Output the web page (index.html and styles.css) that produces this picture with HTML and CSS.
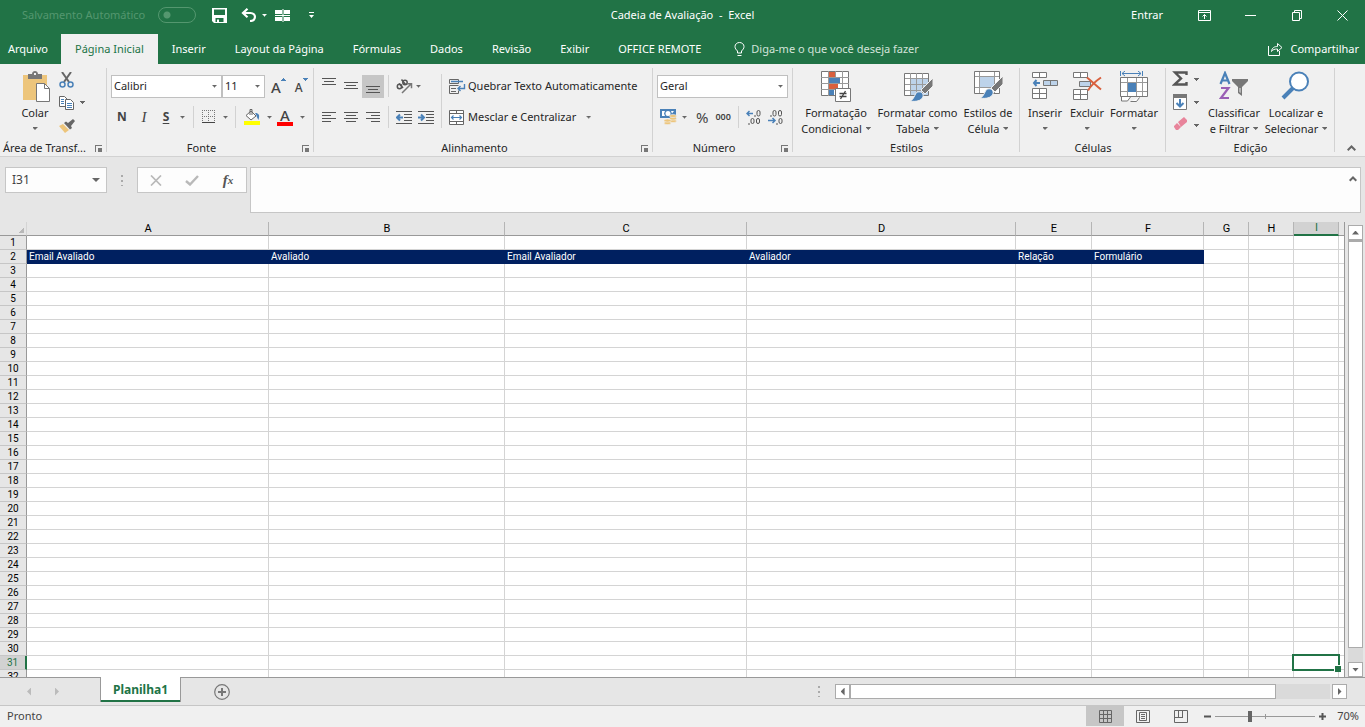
FILE: index.html
```html
<!DOCTYPE html>
<html lang="pt-BR">
<head>
<meta charset="utf-8">
<title>Cadeia de Avaliação - Excel</title>
<link rel="stylesheet" href="styles.css">
</head>
<body>
<div class="app">
  <header class="titlebar">
    <div class="quick">
      <label class="autosave">Salvamento Automático <input type="checkbox" disabled></label>
      <button class="qbtn save" aria-label="Salvar"><svg width="15" height="15" viewBox="0 0 15 15"><path fill="#fff" fill-rule="evenodd" d="M0 0h15v15H2l-2-2zM2 1.500v5.500h11v-5.500zM3.500 10v4h1.500v-2.500h2v2.500h4.500v-4z"/></svg></button>
      <button class="qbtn undo" aria-label="Desfazer"><svg width="16" height="14" viewBox="0 0 16 14"><path fill="none" stroke="#fff" stroke-width="2.200" d="M2 5h7.500c6 0 6 8-.5 8M6.500.8L2 5l4.500 4.200"/></svg><i class="caret light"></i></button>
      <button class="qbtn tiles" aria-label="Janelas"><svg width="16" height="13" viewBox="0 0 16 13"><path fill="#fff" d="M0 1h7v4H0zM9 1h6v4H9zM0 8h7v4H0zM9 8h6v4H9zM7.500 0h1v13h-1zM0 6h15v1H0z"/></svg></button>
      <button class="qbtn" aria-label="Personalizar"><svg width="5" height="6" viewBox="0 0 5 6"><path fill="#fff" d="M0 0h5v1H0zM0 3h5L2.500 6z"/></svg></button>
    </div>
    <h1 class="title">Cadeia de Avaliação&nbsp; -&nbsp; Excel</h1>
    <div class="window">
      <button class="signin">Entrar</button>
      <button class="wbtn" aria-label="Opções da faixa"><svg width="13" height="11" viewBox="0 0 13 11"><path fill="none" stroke="#fff" d="M.5.5h12v10H.5zM.5 2.500h12M6.500 9V4.500M4.500 6.500l2-2 2 2"/></svg></button>
      <button class="wbtn" aria-label="Minimizar"><svg width="11" height="11" viewBox="0 0 11 11"><path stroke="#fff" d="M0 5.500h11"/></svg></button>
      <button class="wbtn" aria-label="Restaurar"><svg width="11" height="11" viewBox="0 0 11 11"><path fill="none" stroke="#fff" d="M1.500 2.500h7v8h-7zM3.500 2.500v-2h7v8h-2"/></svg></button>
      <button class="wbtn" aria-label="Fechar"><svg width="11" height="11" viewBox="0 0 11 11"><path stroke="#fff" d="M.5.5l10 10M10.500.5l-10 10"/></svg></button>
    </div>
  </header>

  <nav class="tabs">
    <button class="tab file">Arquivo</button>
    <button class="tab active">Página Inicial</button>
    <button class="tab">Inserir</button>
    <button class="tab">Layout da Página</button>
    <button class="tab">Fórmulas</button>
    <button class="tab">Dados</button>
    <button class="tab">Revisão</button>
    <button class="tab">Exibir</button>
    <button class="tab">OFFICE REMOTE</button>
    <button class="tab tell"><svg width="11" height="15" viewBox="0 0 11 15"><path fill="none" stroke="#fff" d="M3.500 11V9C2 7.500 1 6.500 1 4.500a4.500 4 0 0 1 9 0C10 6.500 9 7.500 7.500 9v2zM3.500 13.500h4"/></svg>Diga-me o que você deseja fazer</button>
    <button class="tab share"><svg width="16" height="14" viewBox="0 0 16 14"><path fill="none" stroke="#fff" d="M1.500 4v9.500h11V9M4.500 9.500c.5-4 3-5 6-5V1.500l4.500 4-4.500 4V7c-3 0-4.500.5-6 2.500z"/></svg>Compartilhar</button>
  </nav>

  <section class="ribbon">
    <div class="group g-clip">
      <div class="body">
        <button class="big"><span class="pic"><svg width="30" height="31" viewBox="0 0 30 31"><path fill="#edc57b" d="M3 4h24v25H3z"/><path fill="#777" d="M8 3h4c0-4 6-4 6 0h4v5H8z"/><path fill="#f0f0f0" d="M14 2h2v2h-2z"/><path fill="#fff" stroke="#777" d="M16.500 12.500h8l5 5v13h-13z"/><path fill="none" stroke="#777" d="M24.500 12.500v5h5"/></svg></span>Colar<i class="caret"></i></button>
        <div class="stack">
          <button class="mini" aria-label="Recortar"><svg width="15" height="16" viewBox="0 0 15 16"><path stroke="#666" stroke-width="2" d="M3 0l7 10M12 0L5 10"/><g fill="none" stroke="#4a81b8" stroke-width="1.500"><circle cx="3.500" cy="12.500" r="2.500"/><circle cx="11.500" cy="12.500" r="2.500"/></g></svg></button>
          <button class="mini" aria-label="Copiar"><svg width="15" height="14" viewBox="0 0 15 14"><g fill="#fff" stroke="#666"><path d="M.5.5h5l3 3v7h-8z"/><path d="M6.500 3.500h5l3 3v7h-8z"/></g><path stroke="#4a81b8" d="M2 3.500h3M2 5.500h3M2 7.500h3M8 7.500h5M8 9.500h5M8 11.500h5"/></svg><i class="caret"></i></button>
          <button class="mini" aria-label="Pincel"><svg width="16" height="14" viewBox="0 0 16 14"><path fill="#edc57b" d="M0 7l4-2 6 6-4 3z"/><path fill="#666" d="M5 4l2-1.500 2 1.500 5-4 2 2-4 5 1 2-2 1.500z"/></svg></button>
        </div>
      </div>
      <div class="caption">Área de Transf...<button class="launch" aria-label="Mais opções de Área de Transferência"></button></div>
    </div>

    <div class="group g-font">
      <div class="body rows">
        <div class="row">
          <span class="drop w-font"><select aria-label="Fonte"><option>Calibri</option></select></span><span class="drop w-size"><select aria-label="Tamanho"><option>11</option></select></span>
          <button class="tool grow" aria-label="Aumentar fonte"><b class="grow-a">A</b><svg width="5" height="9" viewBox="0 0 5 9"><path fill="#4a81b8" d="M0 6h5V5H4V4H3V3H2v1H1v1H0z"/></svg></button>
          <button class="tool grow" aria-label="Diminuir fonte"><b class="grow-b">A</b><svg width="5" height="9" viewBox="0 0 5 9"><path fill="#4a81b8" d="M0 3h5v1H4v1H3v1H2V5H1V4H0z"/></svg></button>
        </div>
        <div class="row">
          <button class="tool sq"><b>N</b></button>
          <button class="tool sq"><em>I</em></button>
          <button class="tool sq"><b class="under">S</b></button>
          <button class="tool car" aria-label="Sublinhado"><i class="caret"></i></button>
          <i class="sep"></i>
          <button class="tool" aria-label="Bordas"><svg width="14" height="14" viewBox="0 0 14 14"><path fill="none" stroke="#777" stroke-dasharray="1 1" d="M.5 0v13M6.500 0v13M12.500 0v13M0 .5h13M0 6.500h13"/><path stroke="#444" d="M0 12.500h13"/></svg><i class="caret"></i></button>
          <i class="sep"></i>
          <button class="tool" aria-label="Cor de preenchimento"><svg width="16" height="16" viewBox="0 0 16 16"><path fill="#ff0" d="M0 12h16v4H0z"/><path fill="#fff" stroke="#666" d="M7 2l5 5-5 4-5-4.500z"/><path fill="none" stroke="#666" d="M6 6V.5h2V6"/><path fill="#4a81b8" d="M11 4c4 0 5 2 3.500 7C13 9 13 7 11 4z"/></svg><i class="caret"></i></button>
          <button class="tool" aria-label="Cor da fonte"><span class="fcolor">A</span><i class="caret"></i></button>
        </div>
      </div>
      <div class="caption">Fonte<button class="launch" aria-label="Mais opções de Fonte"></button></div>
    </div>

    <div class="group g-align">
      <div class="body">
        <div class="rows lines">
          <div class="row">
            <button class="tool sq top" aria-label="Alinhar em cima"><svg width="14" height="17" viewBox="0 0 14 17"><path stroke="#555" d="M0 .5h14M2 3.500h10M0 6.500h14"/></svg></button>
            <button class="tool sq" aria-label="Alinhar no meio"><svg width="14" height="13" viewBox="0 0 14 13"><path stroke="#555" d="M0 2.500h14M2 5.500h10M0 8.500h14"/></svg></button>
            <button class="tool sq on" aria-label="Alinhar embaixo"><svg width="14" height="13" viewBox="0 0 14 13"><path stroke="#555" d="M0 6.500h14M2 9.500h10M0 12.500h14"/></svg></button>
            <i class="sep"></i>
            <button class="tool orient" aria-label="Orientação"><svg width="17" height="15" viewBox="0 0 17 15"><g fill="none" stroke="#555" stroke-width="1.500"><circle cx="3.500" cy="7.500" r="2.200"/><path d="M3 4.500l4 4.500M5.500.5l4 5"/><circle cx="9" cy="3.500" r="2.200"/></g><path fill="none" stroke="#777" stroke-width="1.500" d="M6 14l9-9M11 4.700h4.500v4.500"/></svg><i class="caret"></i></button>
          </div>
          <div class="row">
            <button class="tool sq" aria-label="À esquerda"><svg width="14" height="11" viewBox="0 0 14 11"><path stroke="#555" d="M0 .5h14M0 3.500h9M0 6.500h14M0 9.500h9"/></svg></button>
            <button class="tool sq" aria-label="Centralizar"><svg width="14" height="11" viewBox="0 0 14 11"><path stroke="#555" d="M0 .5h14M2 3.500h10M0 6.500h14M2 9.500h10"/></svg></button>
            <button class="tool sq" aria-label="À direita"><svg width="14" height="11" viewBox="0 0 14 11"><path stroke="#555" d="M0 .5h14M5 3.500h9M0 6.500h14M5 9.500h9"/></svg></button>
            <i class="sep"></i>
            <button class="tool sq" aria-label="Diminuir recuo"><svg width="16" height="13" viewBox="0 0 16 13"><path stroke="#555" d="M0 .5h16M8 3.500h8M8 6.500h8M8 9.500h8M0 12.500h16"/><path fill="none" stroke="#4a81b8" stroke-width="2" d="M7 6.500H1M4 3.500l-3 3 3 3"/></svg></button>
            <button class="tool sq" aria-label="Aumentar recuo"><svg width="16" height="13" viewBox="0 0 16 13"><path stroke="#555" d="M0 .5h16M8 3.500h8M8 6.500h8M8 9.500h8M0 12.500h16"/><path fill="none" stroke="#4a81b8" stroke-width="2" d="M0 6.500h6M3 3.500l3 3-3 3"/></svg></button>
          </div>
        </div>
        <i class="sep tall"></i>
        <div class="rows">
          <div class="row"><button class="tool text"><svg width="17" height="15" viewBox="0 0 17 15"><path fill="none" stroke="#666" d="M.5.5h9v4h-9zM9.500 6.500h-9v8h9v-3M2 9.500h5M2 12.500h5"/><path fill="none" stroke="#4a81b8" stroke-width="1.400" d="M2 2.500h12M15.500 5v4.500H9M11.500 7L9 9.500l2.500 2.500"/></svg>Quebrar Texto Automaticamente</button></div>
          <div class="row"><button class="tool text"><svg width="17" height="15" viewBox="0 0 17 15"><path fill="#fff" stroke="#666" d="M.5.5h14v14H.5zM.5 3.500h14M.5 11.500h14M7.500.5v3M7.500 11.500v3"/><path fill="none" stroke="#4a81b8" stroke-width="1.200" d="M2 7.500h11M4.500 5.500l-2 2 2 2M10.500 5.500l2 2-2 2"/></svg>Mesclar e Centralizar<i class="caret"></i></button></div>
        </div>
      </div>
      <div class="caption">Alinhamento<button class="launch" aria-label="Mais opções de Alinhamento"></button></div>
    </div>

    <div class="group g-num">
      <div class="body rows">
        <div class="row"><span class="drop w-num"><select aria-label="Formato de número"><option>Geral</option></select></span></div>
        <div class="row">
          <button class="tool money" aria-label="Moeda"><svg width="17" height="16" viewBox="0 0 17 16"><path fill="#4a81b8" d="M0 0h16v9H0z"/><path fill="#fff" d="M2 2h3l-1 2.500L5 7H2zM14 2h-3l1 2.500zM8 2a2.500 2.500 0 0 1 0 5 2.500 2.500 0 0 1 0-5z"/><g fill="#edc57b" stroke="#f0f0f0" stroke-width=".6"><ellipse cx="13" cy="12" rx="3.500" ry="1.600"/><ellipse cx="13" cy="9.500" rx="3.500" ry="1.600"/><ellipse cx="13" cy="7" rx="3.500" ry="1.600"/><ellipse cx="7.500" cy="14" rx="3.500" ry="1.600"/><ellipse cx="7.500" cy="11.500" rx="3.500" ry="1.600"/></g></svg><i class="caret"></i></button>
          <button class="tool pct">%</button>
          <button class="tool zeros">000</button>
          <i class="sep"></i>
          <button class="tool dec" aria-label="Aumentar casas decimais"><svg width="16" height="15" viewBox="0 0 16 15"><path fill="none" stroke="#4a81b8" stroke-width="1.500" d="M7 3.500H1M3.500 1L1 3.500 3.500 6"/><g fill="none" stroke="#555"><rect x="11" y=".5" width="3" height="5.500" rx="1.500"/><rect x="5" y="8.500" width="3" height="5" rx="1.500"/><rect x="10.500" y="8.500" width="3" height="5" rx="1.500"/><path d="M9 5v2M3 13v2"/></g></svg></button>
          <button class="tool dec" aria-label="Diminuir casas decimais"><svg width="16" height="15" viewBox="0 0 16 15"><path fill="none" stroke="#4a81b8" stroke-width="1.500" d="M0 10.500h7M4.500 8L7 10.500 4.500 13"/><g fill="none" stroke="#555"><rect x="5" y=".5" width="3" height="5.500" rx="1.500"/><rect x="10.500" y=".5" width="3" height="5.500" rx="1.500"/><rect x="11" y="8.500" width="3" height="5" rx="1.500"/><path d="M3 5v2M9 13v2"/></g></svg></button>
        </div>
      </div>
      <div class="caption">Número<button class="launch" aria-label="Mais opções de Número"></button></div>
    </div>

    <div class="group g-style">
      <div class="body">
        <button class="big b-cond"><span class="pic"><svg width="30" height="31" viewBox="0 0 30 31"><path fill="#fff" stroke="#777" d="M.5.5h27v24H.5z"/><path fill="none" stroke="#999" d="M7.500 0v25M14.500 0v25M21.500 0v25M0 6.500h28M0 12.500h28M0 18.500h28"/><path fill="#d9603e" d="M8 1h6v5H8zM8 13h9v5H8z"/><path fill="#4a81b8" d="M8 7h11v5H8zM8 19h5v5H8z"/><path fill="#fff" stroke="#777" d="M14.500 17.500h15v13h-15z"/><path stroke="#444" stroke-width="1.300" d="M18.500 22.500h7M18.500 25.500h7M24.500 20l-5 8"/></svg></span><span>Formatação<br>Condicional<i class="caret in"></i></span></button>
        <button class="big b-table"><span class="pic"><svg width="30" height="31" viewBox="0 0 30 31"><path fill="#fff" stroke="#777" d="M1.500 2.500h24v22h-24z"/><path fill="#bdd3ea" d="M8 8h17v16H8z"/><path fill="none" stroke="#999" d="M7.500 2v22M13.500 2v22M19.500 2v22M2 7.500h23M2 13.500h23M2 19.500h23"/><path fill="#777" stroke="#f0f0f0" d="M30 7v8l-8 8-4-4z"/><path fill="#4a81b8" stroke="#f0f0f0" d="M13 22c4-3 8 0 7 4-2 4-7 5-13 4 3-1 4-4 6-8z"/></svg></span><span>Formatar como<br>Tabela<i class="caret in"></i></span></button>
        <button class="big b-cell"><span class="pic"><svg width="30" height="31" viewBox="0 0 30 31"><path fill="#fff" stroke="#777" d="M1.500.5h25v22h-25z"/><path fill="none" stroke="#999" d="M6.500 1v21M21.500 1v21M2 5.500h24M2 16.500h24"/><path fill="#bdd3ea" d="M7 6h14v10H7z"/><path fill="#777" stroke="#f0f0f0" d="M30 5v8l-8 8-4-4z"/><path fill="#4a81b8" stroke="#f0f0f0" d="M13 19c4-3 8 0 7 4-2 4-7 5-13 4 3-1 4-4 6-8z"/></svg></span><span>Estilos de<br>Célula<i class="caret in"></i></span></button>
      </div>
      <div class="caption">Estilos</div>
    </div>

    <div class="group g-cells">
      <div class="body">
        <button class="big b-s"><span class="pic"><svg width="28" height="31" viewBox="0 0 28 31"><path fill="#fff" stroke="#777" d="M1.500 1.500h14v5h-14zM8.500 1.500v5M1.500 17.500h14v10h-14zM8.500 17.500v10M1.500 22.500h14"/><path fill="#bdd3ea" stroke="#777" d="M12.500 9.500h14v5h-14zM19.500 9.500v5"/><path fill="none" stroke="#4a81b8" stroke-width="2" d="M9 12H3M5.500 9L3 12l2.500 3"/></svg></span>Inserir<i class="caret"></i></button>
        <button class="big b-s"><span class="pic"><svg width="30" height="31" viewBox="0 0 30 31"><path fill="#fff" stroke="#777" d="M1.500 1.500h14v5h-14zM8.500 1.500v5M1.500 18.500h14v10h-14zM8.500 18.500v10M1.500 23.500h14"/><path fill="#bdd3ea" stroke="#777" d="M7.500 10.500h11v5h-11z"/><path fill="none" stroke="#d9603e" stroke-width="2" d="M15 6.500c5 4 9 8 14 12M29 6.500c-6 4-10 8-13 13"/></svg></span>Excluir<i class="caret"></i></button>
        <button class="big b-m"><span class="pic"><svg width="28" height="31" viewBox="0 0 28 31"><path fill="none" stroke="#4a81b8" d="M.5 0v5M22.500 0v5M2 2.500h19M5 0L2 2.500 5 5M18 0l3 2.500L18 5"/><path fill="#fff" stroke="#777" d="M.5 6.500h27v19H.5z"/><path fill="none" stroke="#999" d="M7.500 7v18M16.500 7v18M22.500 7v18M1 11.500h26M1 20.500h26"/><path fill="#4a81b8" d="M8 12h8v9H8z"/><path fill="#fff" stroke="#777" d="M1.500 26v4h6l3-4M10.500 30.500h6l3-4"/></svg></span>Formatar<i class="caret"></i></button>
      </div>
      <div class="caption">Células</div>
    </div>

    <div class="group g-edit">
      <div class="body">
        <div class="stack">
          <button class="mini" aria-label="Soma"><svg width="16" height="18" viewBox="0 0 16 18"><path fill="none" stroke="#555" stroke-width="2.400" d="M14.500 4V1.500H3L9 7.500l-6.500 6h12V11"/></svg><i class="caret"></i></button>
          <button class="mini" aria-label="Preencher"><svg width="16" height="18" viewBox="0 0 16 18"><path fill="#fff" stroke="#777" d="M1.500.5h13v15h-13z"/><path fill="#777" d="M1 0h14v4H1z"/><path fill="none" stroke="#4a81b8" stroke-width="2" d="M8 5v7M4.500 9L8 12.500 11.500 9"/></svg><i class="caret"></i></button>
          <button class="mini" aria-label="Limpar"><svg width="16" height="17" viewBox="0 0 16 17"><path fill="#e8849b" d="M6 5l6-5 3 3v2l-6 5zM5 6l4 4-3 3H4L2 10V9z"/></svg><i class="caret"></i></button>
        </div>
        <button class="big b-sort"><span class="pic"><svg width="30" height="31" viewBox="0 0 30 31"><path fill="none" stroke="#4a81b8" stroke-width="2.200" d="M1.500 13L6 2l4.500 11M3 9.500h6"/><path fill="none" stroke="#9a5fb5" stroke-width="2.200" d="M2 17h7.500L2 27h8"/><path fill="#777" d="M13 8h16v2l-6 6v9l-4-3v-6l-6-6z"/><path fill="#f0f0f0" d="M20.500 17h1v5l-1-1z"/></svg></span><span>Classificar<br>e Filtrar<i class="caret in"></i></span></button>
        <button class="big b-find"><span class="pic"><svg width="30" height="31" viewBox="0 0 30 31"><path stroke="#4a81b8" stroke-width="4" d="M2 27l10-10"/><circle cx="18" cy="10.500" r="9" fill="#fff" stroke="#4a81b8" stroke-width="2"/></svg></span><span>Localizar e<br>Selecionar<i class="caret in"></i></span></button>
      </div>
      <div class="caption">Edição</div>
    </div>
    <button class="collapse" aria-label="Recolher a faixa"><svg width="9" height="6" viewBox="0 0 9 6"><path fill="none" stroke="#666" stroke-width="2" d="M.7 5.200l3.800-3.700 3.800 3.700"/></svg></button>
  </section>

  <section class="formula">
    <div class="namebox"><input type="text" value="I31" aria-label="Caixa de nome"><button aria-label="Nomes"><i class="caret wide"></i></button></div>
    <i class="dots"></i>
    <div class="fx">
      <button aria-label="Cancelar"><svg width="12" height="11" viewBox="0 0 12 11"><path stroke="#b9b9b9" stroke-width="1.700" d="M1 .5l10 10M11 .5l-10 10"/></svg></button>
      <button aria-label="Inserir"><svg width="14" height="11" viewBox="0 0 14 11"><path fill="none" stroke="#b9b9b9" stroke-width="2.400" d="M1 6l4 3.500L13 1"/></svg></button>
      <button class="fn">f<small>x</small></button>
    </div>
    <div class="editor"><textarea aria-label="Barra de fórmulas"></textarea><button aria-label="Recolher barra"><svg width="8" height="6" viewBox="0 0 8 6"><path fill="none" stroke="#666" stroke-width="2" d="M.7 4.700L4 1.500l3.300 3.200"/></svg></button></div>
  </section>

  <main class="work">
    <div class="sheet">
      <table class="cells">
        <colgroup><col class="c-row"><col class="c-a"><col class="c-b"><col class="c-a"><col class="c-d"><col class="c-e"><col class="c-f"><col class="c-g"><col class="c-g"><col class="c-g"><col></colgroup>
        <thead><tr><td class="corner"></td><th>A</th><th>B</th><th>C</th><th>D</th><th>E</th><th>F</th><th>G</th><th>H</th><th class="current">I</th><th class="rest"></th></tr></thead>
        <tbody id="rows"></tbody>
      </table>
    </div>
    <div class="vscroll">
      <button aria-label="Rolar para cima"><i class="tri up"></i></button>
      <div class="vthumb"></div><div class="vtrack"></div>
      <button aria-label="Rolar para baixo"><i class="tri down"></i></button>
    </div>
  </main>

  <div class="sheetbar">
    <button class="nav" aria-label="Planilha anterior"><i class="tri left pale"></i></button>
    <button class="nav" aria-label="Próxima planilha"><i class="tri right pale"></i></button>
    <button class="sheettab">Planilha1</button>
    <button class="add" aria-label="Nova planilha"><svg width="16" height="16" viewBox="0 0 16 16"><circle cx="8" cy="8" r="7.300" fill="none" stroke="#777" stroke-width="1.200"/><path stroke="#777" stroke-width="2" d="M8 4v8M4 8h8"/></svg></button>
    <i class="dots small"></i>
    <div class="hscroll">
      <button aria-label="Rolar para a esquerda"><i class="tri left"></i></button>
      <div class="hthumb"></div><div class="htrack"></div>
      <button class="last" aria-label="Rolar para a direita"><i class="tri right"></i></button>
    </div>
  </div>

  <footer class="status">
    <span class="ready">Pronto</span>
    <button class="view on" aria-label="Normal"><svg width="13" height="13" viewBox="0 0 13 13"><path fill="none" stroke="#666" d="M.5.5h12v12H.5zM4.500 0v13M8.500 0v13M0 4.500h13M0 8.500h13"/></svg></button>
    <button class="view" aria-label="Layout da Página"><svg width="14" height="13" viewBox="0 0 14 13"><path fill="none" stroke="#666" d="M.5.5h13v12H.5zM3.500 2.500h7v8h-7zM5 4.500h4M5 6.500h4M5 8.500h4"/></svg></button>
    <button class="view" aria-label="Quebra de página"><svg width="14" height="13" viewBox="0 0 14 13"><path fill="none" stroke="#666" d="M.5.5h13v12H.5zM4.500 0v7M8.500 0v7M0 7.500h9"/></svg></button>
    <button class="zoom" aria-label="Menos zoom"><svg width="7" height="7" viewBox="0 0 7 7"><path stroke="#555" stroke-width="2" d="M0 3.500h7"/></svg></button>
    <input class="slider" type="range" min="0" max="100" value="34" aria-label="Zoom">
    <button class="zoom" aria-label="Mais zoom"><svg width="7" height="7" viewBox="0 0 7 7"><path stroke="#555" stroke-width="2" d="M0 3.500h7M3.500 0v7"/></svg></button>
    <button class="percent">70%</button>
  </footer>
</div>
<script src="script.js"></script>
</body>
</html>
```
FILE: script.js
```js
// Builds the worksheet rows; row 2 holds the column titles.
const titles = ["Email Avaliado", "Avaliado", "Email Avaliador", "Avaliador", "Relação", "Formulário"];
const body = document.getElementById("rows");
for (let r = 1; r <= 32; r++) {
  const tr = document.createElement("tr");
  const th = document.createElement("th");
  th.textContent = r;
  if (r === 31) th.className = "current";
  tr.append(th);
  for (let c = 0; c < 10; c++) {
    const td = document.createElement("td");
    if (r === 2 && c < titles.length) {
      td.textContent = titles[c];
      td.className = "title-cell";
    }
    if (r === 31 && c === 8) td.className = "selected";
    tr.append(td);
  }
  body.append(tr);
}
```
FILE: styles.css
```css
* { box-sizing: border-box; }
body { margin: 0; font: 11px/16px "Noto Sans", "Open Sans", sans-serif; color: #262626; }
button, input, select, textarea { font: inherit; color: inherit; margin: 0; border: 0; padding: 0; background: none; border-radius: 0; outline: 0; }
button { display: flex; align-items: center; justify-content: center; white-space: nowrap; flex: none; }
svg { display: block; flex: none; }
.app { display: flex; flex-direction: column; height: 100vh; background: #e6e6e6; overflow: hidden; }

/* Title bar */
.titlebar { display: grid; grid-template-columns: 1fr auto 1fr; align-items: center; height: 34px; padding-bottom: 4px; background: #217346; color: #fff; flex: none; }
.quick { display: flex; align-items: center; padding-left: 22px; }
.autosave { display: flex; align-items: center; gap: 6px; width: 190px; color: #54976f; justify-content: space-between; padding-right: 16px; white-space: nowrap; }
.autosave input { appearance: none; width: 38px; height: 16px; border: 1px solid #54976f; border-radius: 8px; background: radial-gradient(circle at 8px 7px, #54976f 3px, transparent 4px); }
.qbtn.undo { gap: 5px; margin-left: 14px; }
.qbtn.tiles { margin: 0 18px 0 8px; }
.title { margin: 0; font-size: 11px; font-weight: 400; }
.window { display: flex; justify-content: flex-end; align-items: center; }
.signin { padding: 0 18px; }
.wbtn { width: 46px; height: 30px; }

/* Ribbon tabs */
.tabs { display: flex; height: 30px; background: #217346; color: #fff; flex: none; }
.tab { padding: 0 15px 0 14px; }
.tab.file { padding: 0 13px 0 8px; }
.tab.active { background: #f0f0f0; color: #217346; padding: 0 14px; }
.tab.tell { gap: 6px; margin-left: 4px; color: #d3e3da; }
.tab.share { gap: 7px; margin-left: auto; padding: 0 6px; }

/* Ribbon */
.ribbon { display: flex; height: 93px; background: #f0f0f0; border-bottom: 1px solid #d2d2d2; flex: none; }
.group { display: flex; flex-direction: column; position: relative; flex: none; padding-top: 4px; }
.group::after { content: ""; position: absolute; right: 0; top: 4px; bottom: 4px; border-right: 1px solid #d2d2d2; }
.g-clip { width: 107px; }
.g-font { width: 207px; }
.g-align { width: 339px; }
.g-num { width: 140px; }
.g-style { width: 227px; }
.g-cells { width: 146px; }
.g-edit { width: 169px; }
.body { display: flex; flex: 1; }
.caption { display: flex; align-items: center; justify-content: center; height: 17px; padding-right: 18px; white-space: nowrap; }
.g-style .caption, .g-cells .caption, .g-edit .caption { padding-right: 0; }
.launch { position: absolute; right: 5px; bottom: 4px; width: 7px; height: 7px; border: solid #777; border-width: 1px 0 0 1px; background: linear-gradient(#777, #777) right bottom / 4px 4px no-repeat; }
.caret { flex: none; width: 5px; height: 3px; background: #666; clip-path: polygon(0 0, 100% 0, 100% 33%, 80% 33%, 80% 67%, 60% 67%, 60% 100%, 40% 100%, 40% 67%, 20% 67%, 20% 33%, 0 33%); }
.caret.light { background: #fff; }
.caret.in { display: inline-block; margin: 0 0 3px 4px; }
.caret.wide { width: 8px; height: 4px; clip-path: polygon(0 0, 100% 0, 50% 100%); }
.big { flex-direction: column; justify-content: flex-start; line-height: 16px; align-self: flex-start; }
.big > .caret { margin-top: 6px; }
.pic { display: flex; justify-content: center; height: 37px; padding-top: 3px; }
.g-clip .big { width: 40px; margin-left: 15px; }
.stack { display: flex; flex-direction: column; margin-left: 4px; }
.mini { height: 23px; gap: 6px; justify-content: flex-start; }
.b-cond { width: 78px; margin-left: 4px; }
.b-table { width: 85px; }
.b-cell { width: 56px; }
.b-s { width: 42px; }
.g-cells .body { padding-left: 4px; }
.b-m { width: 52px; }
.g-edit .stack { margin: 0 6px 0 6px; width: 28px; }
.b-sort { width: 56px; }
.b-find { width: 68px; }
.rows { display: flex; flex-direction: column; gap: 7px; padding-top: 6px; }
.row { display: flex; align-items: center; height: 24px; }
.g-font .rows, .g-num .rows { padding-left: 4px; }
.drop { position: relative; display: flex; height: 23px; }
.drop::after { content: ""; position: absolute; right: 5px; top: 10px; width: 5px; height: 3px; background: #666; clip-path: polygon(0 0, 100% 0, 100% 33%, 80% 33%, 80% 67%, 60% 67%, 60% 100%, 40% 100%, 40% 67%, 20% 67%, 20% 33%, 0 33%); }
.drop select { appearance: none; width: 100%; padding: 0 2px; background: #fff; border: 1px solid #c0c0c0; }
.w-font { width: 111px; }
.w-size { width: 43px; }
.w-num { width: 131px; }
.tool { height: 23px; gap: 7px; color: #444; }
.sq { width: 22px; }
.on { background: #c6c6c6; }
.sep { width: 1px; height: 22px; margin: 0 8px 0 7px; background: #d2d2d2; flex: none; }
.sep.tall { height: 54px; margin: 6px 7px 0 4px; }
.grow { gap: 0; align-items: flex-start; margin-left: 6px; }
.grow + .grow { margin-left: 9px; }
.grow-a { font-size: 15px; line-height: 25px; font-weight: 500; }
.grow-b { font-size: 12px; line-height: 26px; font-weight: 500; }
.g-font b.under, .g-font .sq b { font-size: 12px; }
.g-font em { font-family: "Liberation Serif", serif; font-size: 15px; }
.g-font .car { margin: 0 1px 0 3px; }
.g-font .tool:not(.grow) + .tool:last-child { margin-left: 5px; }
.under { text-decoration: underline; text-underline-offset: 2px; }
.fcolor { width: 16px; height: 17px; border-bottom: 4px solid #f00; font-size: 15px; line-height: 13px; font-weight: 500; }
.tool.text { gap: 2px; color: #262626; }
.tool.text .caret { margin-left: 8px; }
.lines { padding-left: 4px; }
.lines .sep { margin: 0 4px; }
.orient { margin-left: 3px; gap: 3px; }
.money { margin-left: 3px; gap: 5px; }
.pct { font-size: 15px; margin-left: 9px; }
.zeros { font-size: 9px; font-weight: 600; margin-left: 7px; }
.g-num .sep { margin: 0 7px; }
.dec { margin-right: 6px; }
.collapse { margin: 0 9px 5px auto; align-self: flex-end; }

/* Formula bar */
.formula { display: flex; align-items: flex-start; height: 65px; padding: 10px 4px 9px 5px; flex: none; color: #444; }
.namebox { display: flex; width: 102px; height: 26px; background: #fdfdfd; border: 1px solid #c6c6c6; }
.namebox input { flex: 1; min-width: 0; padding-left: 6px; font-size: 12px; }
.namebox button { width: 20px; }
.dots { width: 2px; height: 11px; margin: 8px 14px; background: repeating-linear-gradient(#aaa 0 2px, transparent 2px 5px); }
.fx { display: flex; width: 110px; height: 26px; background: #fdfdfd; border: 1px solid #c6c6c6; margin-right: 3px; }
.fx button { flex: 1; }
.fn { font: italic 700 15px/16px "Liberation Serif", serif; color: #555; }
.fn small { font-size: 11px; line-height: 20px; }
.editor { display: flex; flex: 1; height: 46px; background: #fdfdfd; border: 1px solid #c6c6c6; }
.editor textarea { flex: 1; resize: none; }
.editor button { width: 15px; height: 22px; }

/* Worksheet */
.work { display: flex; flex: 1; min-height: 0; }
.sheet { flex: 1; min-width: 0; overflow: hidden; background: linear-gradient(#e6e6e6 14px, #fff 14px); border-right: 1px solid #999; }
.cells { table-layout: fixed; width: 100%; border-collapse: separate; border-spacing: 0; font: 10px/13px Roboto, sans-serif; color: #000; }
.c-row { width: 27px; }
.c-a { width: 242px; }
.c-b { width: 236px; }
.c-d { width: 269px; }
.c-e { width: 76px; }
.c-f { width: 112px; }
.c-g { width: 45px; }
.cells th, .cells td { height: 14px; padding: 0; border: solid #d4d4d4; border-width: 0 1px 1px 0; font-weight: 400; white-space: nowrap; }
.cells th { background: #e6e6e6; text-align: center; border-color: #b5b5b5; }
.cells thead th { font-size: 11px; padding-left: 1px; }
.cells thead th, .cells .corner { border-bottom-color: #999; }
.cells tbody th { border-right-color: #999; border-bottom-color: #c6c6c6; }
.cells .corner { background: linear-gradient(135deg, transparent 50%, #b8b8b8 50%) 18px 5px / 6px 6px no-repeat #e6e6e6; }
.cells .current { background: #d2d2d2; color: #217346; }
.cells thead .current { border-bottom: 2px solid #217346; line-height: 12px; }
.cells tbody .current { border-right: 2px solid #217346; }
.cells .rest { border-right: 0; }
.cells td.title-cell { background: #002060; border-color: #002060; color: #fff; padding-left: 2px; }
.cells td:last-child { border-right: 0; }
.selected { position: relative; }
.selected::before { content: ""; position: absolute; inset: -2px; border: 2px solid #217346; }
.selected::after { content: ""; position: absolute; right: -3px; bottom: -3px; width: 6px; height: 6px; background: #217346; border: solid #fff; border-width: 1px 0 0 1px; }
.vscroll { display: flex; flex-direction: column; width: 20px; padding: 3px 2px 0 3px; }
.vscroll button, .hscroll button { width: 15px; height: 15px; background: #fff; border: 1px solid #ababab; }
.vthumb { flex: 408; background: #fff; border: 1px solid #ababab; border-top-width: 2px; }
.vtrack { flex: 14; background: #dadada; }
.tri { width: 7px; height: 4px; background: #666; }
.up { clip-path: polygon(50% 0, 100% 100%, 0 100%); }
.down { clip-path: polygon(0 0, 100% 0, 50% 100%); }
.left, .right { width: 4px; height: 8px; }
.left { clip-path: polygon(100% 0, 100% 100%, 0 50%); }
.right { clip-path: polygon(0 0, 100% 50%, 0 100%); }
.pale { background: #bbb; }

/* Sheet tabs */
.sheetbar { display: flex; align-items: center; height: 28px; border-top: 1px solid #999; flex: none; }
.nav { width: 28px; }
.nav:first-child { margin-left: 15px; }
.sheettab { align-self: flex-start; height: 25px; width: 81px; margin: -1px 0 0 29px; background: #fff; border: solid #999; border-width: 0 1px; box-shadow: inset 0 -2px #217346; color: #217346; font-size: 12px; font-weight: 700; }
.add { margin-left: 33px; }
.dots.small { margin: 0 15px 0 auto; }
.hscroll { display: flex; width: 37.5%; margin-right: 18px; }
.hthumb { flex: 425; border: 1px solid #ababab; background: #fff; }
.htrack { flex: 54; background: #dadada; }
.hscroll .last { margin-left: 2px; }

/* Status bar */
.status { display: flex; align-items: center; height: 22px; padding-bottom: 1px; background: #f0f0f0; border-top: 1px solid #c6c6c6; color: #444; flex: none; }
.ready { margin: 0 auto 0 7px; }
.view { width: 38px; height: 20px; }
.zoom { width: 15px; height: 20px; }
.slider { appearance: none; width: 100px; height: 13px; background: linear-gradient(#999, #999) center / 100% 1px no-repeat, linear-gradient(#999, #999) center / 1px 5px no-repeat; }
.slider::-webkit-slider-thumb { appearance: none; width: 4px; height: 11px; background: #666; }
.percent { width: 35px; padding-left: 1px; }
```
